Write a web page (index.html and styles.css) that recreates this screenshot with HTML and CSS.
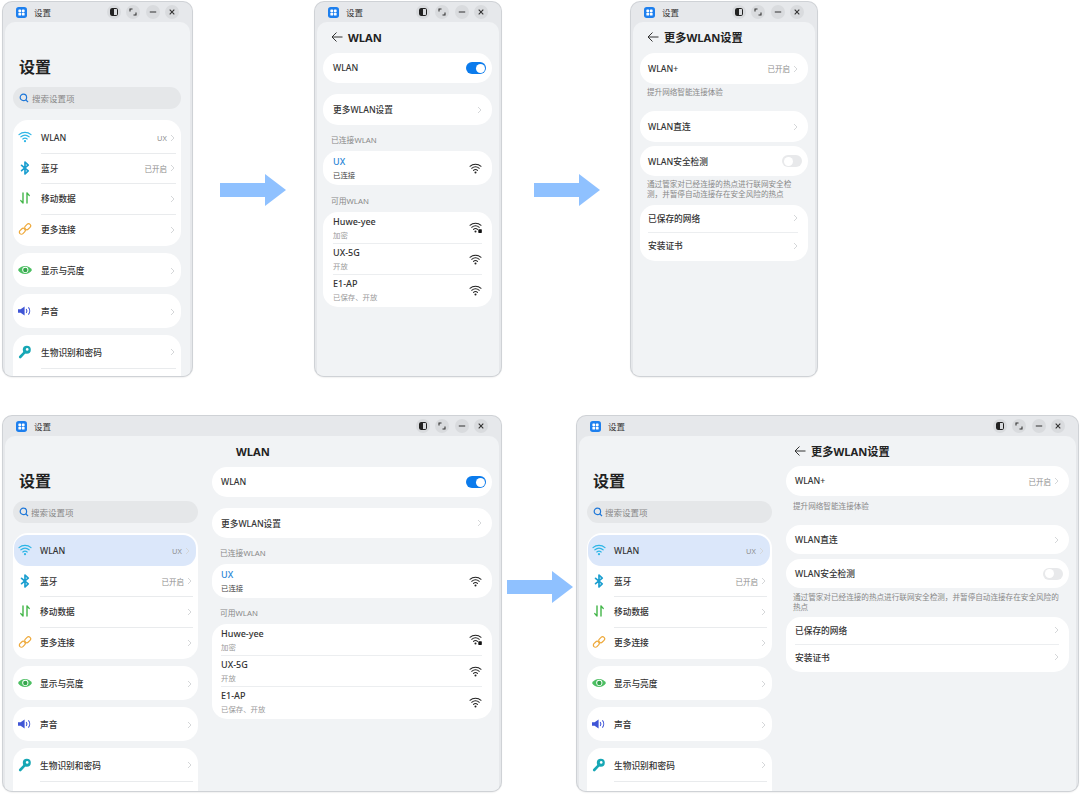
FILE: index.html
```html
<!DOCTYPE html>
<html lang="zh-CN">
<head>
<meta charset="utf-8">
<title>设置</title>
<link rel="stylesheet" href="styles.css">
</head>
<body>
<svg class="defs" aria-hidden="true">
  <symbol id="app" viewBox="0 0 12 12"><rect width="12" height="12" rx="3" fill="#1d7fee"/><rect x="2.6" y="2.6" width="3" height="3" rx=".8" fill="#fff"/><rect x="6.4" y="2.6" width="3" height="3" rx=".8" fill="#fff"/><rect x="2.6" y="6.4" width="3" height="3" rx=".8" fill="#fff"/><rect x="6.4" y="6.4" width="3" height="3" rx=".8" fill="#fff"/></symbol>
  <symbol id="split" viewBox="0 0 14 14"><rect x="3.5" y="3.5" width="7" height="7" rx="1.2" fill="none" stroke="#222" stroke-width="1"/><path d="M4 4h3v6H4z" fill="#222"/></symbol>
  <symbol id="restore" viewBox="0 0 14 14"><path d="M4 6.5V4h2.5M10 7.500V10H7.500" fill="none" stroke="#333" stroke-width="1.1"/></symbol>
  <symbol id="min" viewBox="0 0 14 14"><path d="M3.8 7h6.4" stroke="#333" stroke-width="1.2"/></symbol>
  <symbol id="close" viewBox="0 0 14 14"><path d="M4.7 4.7l4.6 4.6M9.3 4.7l-4.6 4.6" stroke="#333" stroke-width="1.1"/></symbol>
  <symbol id="search" viewBox="0 0 10 10"><circle cx="4.4" cy="4.4" r="3.2" fill="none" stroke="#1f78d8" stroke-width="1.2"/><path d="M6.8 6.8l2.2 2.2" stroke="#1f78d8" stroke-width="1.2"/></symbol>
  <symbol id="wifi" viewBox="0 0 14 14"><g fill="none" stroke="#2cb5e6" stroke-width="1.2" stroke-linecap="round"><path d="M1 4.600c3.400-3 8.600-3 12 0"/><path d="M2.900 6.800c2.400-2 5.800-2 8.200 0"/><path d="M4.800 9c1.300-1 3.100-1 4.400 0"/></g><circle cx="7" cy="11.200" r="1.100" fill="#2cb5e6"/></symbol>
  <symbol id="bt" viewBox="0 0 14 14"><g fill="none" stroke="#1c9fd0" stroke-linecap="round" stroke-linejoin="round"><path d="M3.600 4.400l6.600 5.400L7 13V1l3.200 3.200-6.600 5.400" stroke-width="1.700"/></g></symbol>
  <symbol id="data" viewBox="0 0 14 14"><g fill="none" stroke="#43b649" stroke-width="1.4" stroke-linecap="round" stroke-linejoin="round"><path d="M5 2v10M2.800 9.600L5 12"/><path d="M9 12V2M9 2l2.200 2.400"/></g></symbol>
  <symbol id="link" viewBox="0 0 14 14"><g fill="none" stroke="#eea93a" stroke-width="1.200"><rect x="1" y="7.200" width="6.600" height="4.200" rx="2.100" transform="rotate(-45 4.300 9.300)"/><rect x="6.400" y="2.600" width="6.600" height="4.200" rx="2.100" transform="rotate(-45 9.700 4.700)"/></g></symbol>
  <symbol id="eye" viewBox="0 0 14 14"><path d="M0 7C3 1.600 11 1.600 14 7 11 12.400 3 12.400 0 7z" fill="#4cbf62"/><circle cx="7.300" cy="6.800" r="3.100" fill="#fff"/><circle cx="7.300" cy="7" r="2.200" fill="#35a54c"/></symbol>
  <symbol id="sound" viewBox="0 0 14 14"><path d="M0 5.200h2.600L6.600 2.600v8.800L2.600 8.800H0z" fill="#3f55d6"/><path d="M8.200 5c.9 1.200.9 2.800 0 4M10.400 3.400c1.700 2 1.700 5.200 0 7.200" fill="none" stroke="#3f55d6" stroke-width="1.100"/></symbol>
  <symbol id="key" viewBox="0 0 14 14"><path d="M6.400 7.600L2.200 12" stroke="#17a7b5" stroke-width="2.600" stroke-linecap="round"/><circle cx="8.800" cy="4.800" r="4" fill="#17a7b5"/><circle cx="9.200" cy="4.400" r="1.300" fill="#fff"/></symbol>
  <symbol id="wifib" viewBox="0 0 14 14"><g fill="none" stroke="#222" stroke-width="1.100" stroke-linecap="round"><path d="M1 4.600c3.400-3 8.600-3 12 0"/><path d="M2.900 6.800c2.400-2 5.800-2 8.200 0"/><path d="M4.800 9c1.300-1 3.100-1 4.400 0"/></g><circle cx="7" cy="11.200" r="1.100" fill="#222"/></symbol>
  <symbol id="wifil" viewBox="0 0 14 14"><g fill="none" stroke="#222" stroke-width="1.100" stroke-linecap="round"><path d="M1 4.600c3.400-3 8.600-3 12 0"/><path d="M2.900 6.800c2.400-2 5.800-2 8.200 0"/><path d="M4.800 9c1.300-1 3.100-1 4.400 0"/></g><circle cx="7" cy="11.200" r="1.100" fill="#222"/><rect x="10" y="9" width="3.800" height="3.800" rx=".6" fill="#111"/></symbol>
  <symbol id="chev" viewBox="0 0 5 8"><path d="M1 1l3 3-3 3" fill="none" stroke="#d5d7d9" stroke-width="1"/></symbol>
  <symbol id="back" viewBox="0 0 12 12"><path d="M11.500 6H1M5.500 1.500L1 6l4.500 4.500" fill="none" stroke="#333" stroke-width="1"/></symbol>
  <symbol id="arrow" viewBox="0 0 66 32"><path d="M0 9h45V0l21 16-21 16v-9H0z" fill="#8fc1ff"/></symbol>
</svg>

<!-- window 1 -->
<section class="window w1">
  <header class="titlebar"><svg class="app"><use href="#app"/></svg><span class="apptitle">设置</span><span class="controls"><i class="ctl"><svg><use href="#split"/></svg></i><i class="ctl"><svg><use href="#restore"/></svg></i><i class="ctl"><svg><use href="#min"/></svg></i><i class="ctl"><svg><use href="#close"/></svg></i></span></header>
  <div class="panel">
    <div class="pane nav fill">
      <h1 class="bigtitle">设置</h1>
      <div class="search"><svg><use href="#search"/></svg><span>搜索设置项</span></div>
      <div class="card group">
        <div class="nrow"><svg class="nico"><use href="#wifi"/></svg><div class="nbody"><span class="lbl">WLAN</span><span class="val">UX</span><svg class="chev"><use href="#chev"/></svg></div></div>
        <div class="nrow"><svg class="nico"><use href="#bt"/></svg><div class="nbody"><span class="lbl">蓝牙</span><span class="val">已开启</span><svg class="chev"><use href="#chev"/></svg></div></div>
        <div class="nrow"><svg class="nico"><use href="#data"/></svg><div class="nbody"><span class="lbl">移动数据</span><svg class="chev"><use href="#chev"/></svg></div></div>
        <div class="nrow"><svg class="nico"><use href="#link"/></svg><div class="nbody"><span class="lbl">更多连接</span><svg class="chev"><use href="#chev"/></svg></div></div>
      </div>
      <div class="card single"><div class="nrow tall"><svg class="nico"><use href="#eye"/></svg><div class="nbody"><span class="lbl">显示与亮度</span><svg class="chev"><use href="#chev"/></svg></div></div></div>
      <div class="card single"><div class="nrow tall"><svg class="nico"><use href="#sound"/></svg><div class="nbody"><span class="lbl">声音</span><svg class="chev"><use href="#chev"/></svg></div></div></div>
      <div class="card single last"><div class="nrow tall"><svg class="nico"><use href="#key"/></svg><div class="nbody"><span class="lbl">生物识别和密码</span><svg class="chev"><use href="#chev"/></svg></div></div><div class="nrow tall"><span class="nico"></span><div class="nbody"></div></div></div>
    </div>
  </div>
</section>

<svg class="bigarrow a1"><use href="#arrow"/></svg>

<!-- window 2 -->
<section class="window w2">
  <header class="titlebar"><svg class="app"><use href="#app"/></svg><span class="apptitle">设置</span><span class="controls"><i class="ctl"><svg><use href="#split"/></svg></i><i class="ctl"><svg><use href="#restore"/></svg></i><i class="ctl"><svg><use href="#min"/></svg></i><i class="ctl"><svg><use href="#close"/></svg></i></span></header>
  <div class="panel">
    <div class="pane detail narrow">
      <div class="head"><svg class="back"><use href="#back"/></svg><h2>WLAN</h2></div>
      <div class="card h30"><div class="srow"><span class="lbl">WLAN</span><span class="toggle on"></span></div></div>
      <div class="card h31 mt11"><div class="srow"><span class="lbl">更多WLAN设置</span><svg class="chev"><use href="#chev"/></svg></div></div>
      <div class="sect">已连接WLAN</div>
      <div class="card h34"><div class="srow"><div class="net"><b class="cur">UX</b><small class="dark">已连接</small></div><svg class="wf"><use href="#wifib"/></svg></div></div>
      <div class="sect second">可用WLAN</div>
      <div class="card nets">
        <div class="srow"><div class="net"><b>Huwe-yee</b><small>加密</small></div><svg class="wf"><use href="#wifil"/></svg></div>
        <div class="srow"><div class="net"><b>UX-5G</b><small>开放</small></div><svg class="wf"><use href="#wifib"/></svg></div>
        <div class="srow"><div class="net"><b>E1-AP</b><small>已保存、开放</small></div><svg class="wf"><use href="#wifib"/></svg></div>
      </div>
    </div>
  </div>
</section>

<svg class="bigarrow a2"><use href="#arrow"/></svg>

<!-- window 3 -->
<section class="window w3">
  <header class="titlebar"><svg class="app"><use href="#app"/></svg><span class="apptitle">设置</span><span class="controls"><i class="ctl"><svg><use href="#split"/></svg></i><i class="ctl"><svg><use href="#restore"/></svg></i><i class="ctl"><svg><use href="#min"/></svg></i><i class="ctl"><svg><use href="#close"/></svg></i></span></header>
  <div class="panel">
    <div class="pane detail narrow">
      <div class="head"><svg class="back"><use href="#back"/></svg><h2>更多WLAN设置</h2></div>
      <div class="card h31"><div class="srow"><span class="lbl">WLAN+</span><span class="rval"><span class="val">已开启</span><svg class="chev"><use href="#chev"/></svg></span></div></div>
      <p class="hint one">提升网络智能连接体验</p>
      <div class="card h31"><div class="srow"><span class="lbl">WLAN直连</span><svg class="chev"><use href="#chev"/></svg></div></div>
      <div class="card h30 mt4"><div class="srow"><span class="lbl">WLAN安全检测</span><span class="toggle"></span></div></div>
      <p class="hint two">通过管家对已经连接的热点进行联网安全检测，并暂停自动连接存在安全风险的热点</p>
      <div class="card pair">
        <div class="srow"><span class="lbl">已保存的网络</span><svg class="chev"><use href="#chev"/></svg></div>
        <div class="srow"><span class="lbl">安装证书</span><svg class="chev"><use href="#chev"/></svg></div>
      </div>
    </div>
  </div>
</section>

<!-- window 4 -->
<section class="window w4">
  <header class="titlebar"><svg class="app"><use href="#app"/></svg><span class="apptitle">设置</span><span class="controls"><i class="ctl"><svg><use href="#split"/></svg></i><i class="ctl"><svg><use href="#restore"/></svg></i><i class="ctl"><svg><use href="#min"/></svg></i><i class="ctl"><svg><use href="#close"/></svg></i></span></header>
  <div class="panel">
    <div class="pane nav side">
      <h1 class="bigtitle">设置</h1>
      <div class="search"><svg><use href="#search"/></svg><span>搜索设置项</span></div>
      <div class="card group">
        <div class="nrow selected"><svg class="nico"><use href="#wifi"/></svg><div class="nbody"><span class="lbl">WLAN</span><span class="val">UX</span><svg class="chev"><use href="#chev"/></svg></div></div>
        <div class="nrow"><svg class="nico"><use href="#bt"/></svg><div class="nbody"><span class="lbl">蓝牙</span><span class="val">已开启</span><svg class="chev"><use href="#chev"/></svg></div></div>
        <div class="nrow"><svg class="nico"><use href="#data"/></svg><div class="nbody"><span class="lbl">移动数据</span><svg class="chev"><use href="#chev"/></svg></div></div>
        <div class="nrow"><svg class="nico"><use href="#link"/></svg><div class="nbody"><span class="lbl">更多连接</span><svg class="chev"><use href="#chev"/></svg></div></div>
      </div>
      <div class="card single"><div class="nrow tall"><svg class="nico"><use href="#eye"/></svg><div class="nbody"><span class="lbl">显示与亮度</span><svg class="chev"><use href="#chev"/></svg></div></div></div>
      <div class="card single"><div class="nrow tall"><svg class="nico"><use href="#sound"/></svg><div class="nbody"><span class="lbl">声音</span><svg class="chev"><use href="#chev"/></svg></div></div></div>
      <div class="card single last"><div class="nrow tall"><svg class="nico"><use href="#key"/></svg><div class="nbody"><span class="lbl">生物识别和密码</span><svg class="chev"><use href="#chev"/></svg></div></div><div class="nrow tall"><span class="nico"></span><div class="nbody"></div></div></div>
    </div>
    <div class="pane detail wide">
      <div class="head nobk"><h2>WLAN</h2></div>
      <div class="card h30"><div class="srow"><span class="lbl">WLAN</span><span class="toggle on"></span></div></div>
      <div class="card h31 mt11"><div class="srow"><span class="lbl">更多WLAN设置</span><svg class="chev"><use href="#chev"/></svg></div></div>
      <div class="sect">已连接WLAN</div>
      <div class="card h34"><div class="srow"><div class="net"><b class="cur">UX</b><small class="dark">已连接</small></div><svg class="wf"><use href="#wifib"/></svg></div></div>
      <div class="sect second">可用WLAN</div>
      <div class="card nets">
        <div class="srow"><div class="net"><b>Huwe-yee</b><small>加密</small></div><svg class="wf"><use href="#wifil"/></svg></div>
        <div class="srow"><div class="net"><b>UX-5G</b><small>开放</small></div><svg class="wf"><use href="#wifib"/></svg></div>
        <div class="srow"><div class="net"><b>E1-AP</b><small>已保存、开放</small></div><svg class="wf"><use href="#wifib"/></svg></div>
      </div>
    </div>
  </div>
</section>

<svg class="bigarrow a3"><use href="#arrow"/></svg>

<!-- window 5 -->
<section class="window w5">
  <header class="titlebar"><svg class="app"><use href="#app"/></svg><span class="apptitle">设置</span><span class="controls"><i class="ctl"><svg><use href="#split"/></svg></i><i class="ctl"><svg><use href="#restore"/></svg></i><i class="ctl"><svg><use href="#min"/></svg></i><i class="ctl"><svg><use href="#close"/></svg></i></span></header>
  <div class="panel">
    <div class="pane nav side">
      <h1 class="bigtitle">设置</h1>
      <div class="search"><svg><use href="#search"/></svg><span>搜索设置项</span></div>
      <div class="card group">
        <div class="nrow selected"><svg class="nico"><use href="#wifi"/></svg><div class="nbody"><span class="lbl">WLAN</span><span class="val">UX</span><svg class="chev"><use href="#chev"/></svg></div></div>
        <div class="nrow"><svg class="nico"><use href="#bt"/></svg><div class="nbody"><span class="lbl">蓝牙</span><span class="val">已开启</span><svg class="chev"><use href="#chev"/></svg></div></div>
        <div class="nrow"><svg class="nico"><use href="#data"/></svg><div class="nbody"><span class="lbl">移动数据</span><svg class="chev"><use href="#chev"/></svg></div></div>
        <div class="nrow"><svg class="nico"><use href="#link"/></svg><div class="nbody"><span class="lbl">更多连接</span><svg class="chev"><use href="#chev"/></svg></div></div>
      </div>
      <div class="card single"><div class="nrow tall"><svg class="nico"><use href="#eye"/></svg><div class="nbody"><span class="lbl">显示与亮度</span><svg class="chev"><use href="#chev"/></svg></div></div></div>
      <div class="card single"><div class="nrow tall"><svg class="nico"><use href="#sound"/></svg><div class="nbody"><span class="lbl">声音</span><svg class="chev"><use href="#chev"/></svg></div></div></div>
      <div class="card single last"><div class="nrow tall"><svg class="nico"><use href="#key"/></svg><div class="nbody"><span class="lbl">生物识别和密码</span><svg class="chev"><use href="#chev"/></svg></div></div><div class="nrow tall"><span class="nico"></span><div class="nbody"></div></div></div>
    </div>
    <div class="pane detail wide">
      <div class="head"><svg class="back"><use href="#back"/></svg><h2>更多WLAN设置</h2></div>
      <div class="card h31"><div class="srow"><span class="lbl">WLAN+</span><span class="rval"><span class="val">已开启</span><svg class="chev"><use href="#chev"/></svg></span></div></div>
      <p class="hint one">提升网络智能连接体验</p>
      <div class="card h31"><div class="srow"><span class="lbl">WLAN直连</span><svg class="chev"><use href="#chev"/></svg></div></div>
      <div class="card h30 mt4"><div class="srow"><span class="lbl">WLAN安全检测</span><span class="toggle"></span></div></div>
      <p class="hint two">通过管家对已经连接的热点进行联网安全检测，并暂停自动连接存在安全风险的热点</p>
      <div class="card pair">
        <div class="srow"><span class="lbl">已保存的网络</span><svg class="chev"><use href="#chev"/></svg></div>
        <div class="srow"><span class="lbl">安装证书</span><svg class="chev"><use href="#chev"/></svg></div>
      </div>
    </div>
  </div>
</section>
</body>
</html>
```

FILE: styles.css
```css
* { box-sizing: border-box; }
html, body { margin: 0; height: 100%; }
body {
  position: relative;
  width: 1080px;
  height: 794px;
  overflow: hidden;
  background: #fff;
  color: #333;
  font-family: "Noto Sans", "Noto Sans CJK SC", sans-serif;
}
.defs { position: absolute; width: 0; height: 0; }

/* windows sit on a free canvas */
.window {
  position: absolute;
  display: flex;
  flex-direction: column;
  background: #e6e8eb;
  border-radius: 9px;
  box-shadow: 0 0 0 1px #cfd2d6, 0 1px 2px rgba(0,0,0,.18);
  overflow: hidden;
}
.w1 { left: 3px; top: 2px; width: 189px; height: 374px; }
.w2 { left: 315px; top: 2px; width: 186px; height: 374px; }
.w3 { left: 631px; top: 2px; width: 186px; height: 374px; }
.w4 { left: 3px; top: 416px; width: 498px; height: 375px; }
.w5 { left: 577px; top: 416px; width: 501px; height: 375px; }

.titlebar {
  flex: none;
  height: 20px;
  display: flex;
  align-items: center;
  padding: 0 13px 0 13px;
}
.app { width: 11px; height: 11px; flex: none; }
.apptitle { margin-left: 7px; font-size: 8.500px; color: #333; }
.controls { margin-left: auto; display: flex; gap: 5.500px; }
.ctl { width: 14px; height: 14px; border-radius: 50%; background: #d9dbde; display: block; }
.ctl svg { display: block; width: 14px; height: 14px; }

.panel {
  flex: 1;
  min-height: 0;
  display: flex;
  margin: 0 2px;
  background: #f1f3f5;
  border-radius: 10px 10px 0 0;
  overflow: hidden;
}
.pane { min-width: 0; }
.nav.fill { flex: 1; padding: 0 9px 0 8px; }
.nav.side { flex: none; width: 200px; padding: 0 7px 0 8px; }
.detail { flex: 1; }
.detail.narrow { padding: 0 7px 0 6px; }
.detail.wide { padding: 0 7px; }

.bigtitle {
  margin: 33px 0 0 6px;
  height: 24px;
  font-size: 16px;
  line-height: 24px;
  font-weight: 700;
  color: #222;
}
.search {
  margin-top: 8px;
  height: 22px;
  border-radius: 11px;
  background: #e5e7e9;
  display: flex;
  align-items: center;
  padding-left: 6px;
  font-size: 8.500px;
  color: #888;
}
.search svg { width: 10px; height: 10px; margin-right: 3px; }
.side .search svg { margin-right: 2px; }

.card { background: #fff; border-radius: 15px; }
.group { margin-top: 11px; padding: 2px 0; }
.side .group { margin-top: 10px; }
.single { margin-top: 7px; }
.last { height: 60px; border-radius: 15px 15px 0 0; overflow: hidden; }

.nrow { height: 30.600px; display: flex; align-items: center; padding-left: 5px; }
.nrow.tall { height: 34px; }
.last .nrow.tall:first-child { height: 33px; }
.nrow.selected { margin: 0 2px 0 1px; padding-left: 4px; background: #dbe7fa; border-radius: 13px; }
.nrow.selected + .nrow .nbody { border-top-color: transparent; }
.nico { width: 14px; height: 14px; flex: none; display: block; }
.nbody {
  flex: 1;
  align-self: stretch;
  margin: 0 5px 0 9px;
  display: flex;
  align-items: center;
  border-top: 1px solid transparent;
}
.side .nbody { margin-left: 8px; }
.nrow + .nrow .nbody { border-top-color: #e9ebed; }
.lbl { font-size: 8.700px; color: #333; font-weight: 500; white-space: nowrap; }
.val { margin-left: auto; font-size: 7.500px; color: #8d8d8d; white-space: nowrap; }
.chev { width: 5px; height: 8px; flex: none; margin-left: auto; }
.val + .chev { margin-left: 3px; }
.nbody .chev { margin-right: 1px; }

.head { height: 30px; margin-bottom: 1px; display: flex; align-items: center; padding-left: 8px; gap: 5px; }
.head.nobk { padding-left: 24px; }
.back { width: 12px; height: 12px; flex: none; }
.head h2 { margin: 0; font-size: 11.200px; font-weight: 700; color: #222; white-space: nowrap; }

.h30 { height: 30px; }
.h31 { height: 31px; }
.h34 { height: 34px; }
.mt11 { margin-top: 11px; }
.mt4 { margin-top: 4px; }
.card > .srow:only-child { height: 100%; }

.srow {
  margin: 0 10px 0 9px;
  display: flex;
  align-items: center;
  justify-content: space-between;
}
.w2 .srow { margin-left: 10px; }
.w3 .detail.narrow { padding-left: 7px; }
.w3 .srow { margin-left: 8px; }
.w3 .head { padding-left: 7px; }
.srow + .srow { border-top: 1px solid #eceef0; }
.rval { display: flex; align-items: center; }
.toggle {
  width: 20px;
  height: 12px;
  margin-right: -4px;
  border-radius: 6px;
  background: #e8e9eb;
  display: flex;
  padding: 1.500px;
}
.toggle::before { content: ""; width: 9px; height: 9px; border-radius: 50%; background: #fff; }
.toggle.on { background: #0b7bec; justify-content: flex-end; }

.sect { padding: 9px 0 5px 8px; font-size: 7.800px; line-height: 12px; color: #888; white-space: nowrap; }
.sect.second { padding-top: 10px; }
.w4 .h31 { height: 30px; }
.w4 .sect.second { padding-top: 9px; }

.net { display: flex; flex-direction: column; gap: 2px; }
.net b { font-size: 9px; line-height: 13px; font-weight: 500; color: #333; white-space: nowrap; }
.net b.cur { color: #2a86d6; }
.net small { font-size: 7.400px; line-height: 11px; color: #999; white-space: nowrap; }
.net small.dark { color: #444; }
.wf { width: 13px; height: 13px; flex: none; }

.nets { height: 95px; }
.nets .srow { height: 31px; }
.pair { height: 56px; }
.pair .srow { height: 27px; }

.hint { margin: 0; padding-left: 7px; font-size: 7.600px; color: #888; }
.hint.one { padding-top: 2px; padding-bottom: 13px; line-height: 12px; }
.hint.two { padding-top: 2.500px; padding-bottom: 5px; line-height: 10.500px; padding-right: 7px; }

/* the wide "more settings" pane is a little tighter */
.w5 .head { margin-bottom: 0; }
.w5 .h31 { height: 29px; }
.w5 .head + .h31 { height: 30px; }
.w5 .h30 { height: 29px; margin-top: 5px; }
.w5 .hint.one { padding-top: 4px; padding-bottom: 13px; }
.w5 .hint.two { padding-top: 3.500px; padding-bottom: 4.500px; }
.w5 .pair { height: 55px; }
.w5 .pair .srow { height: 26.500px; }

.bigarrow { position: absolute; width: 66px; height: 32px; }
.a1 { left: 220px; top: 174px; }
.a2 { left: 534px; top: 174px; }
.a3 { left: 507px; top: 571px; }
```
